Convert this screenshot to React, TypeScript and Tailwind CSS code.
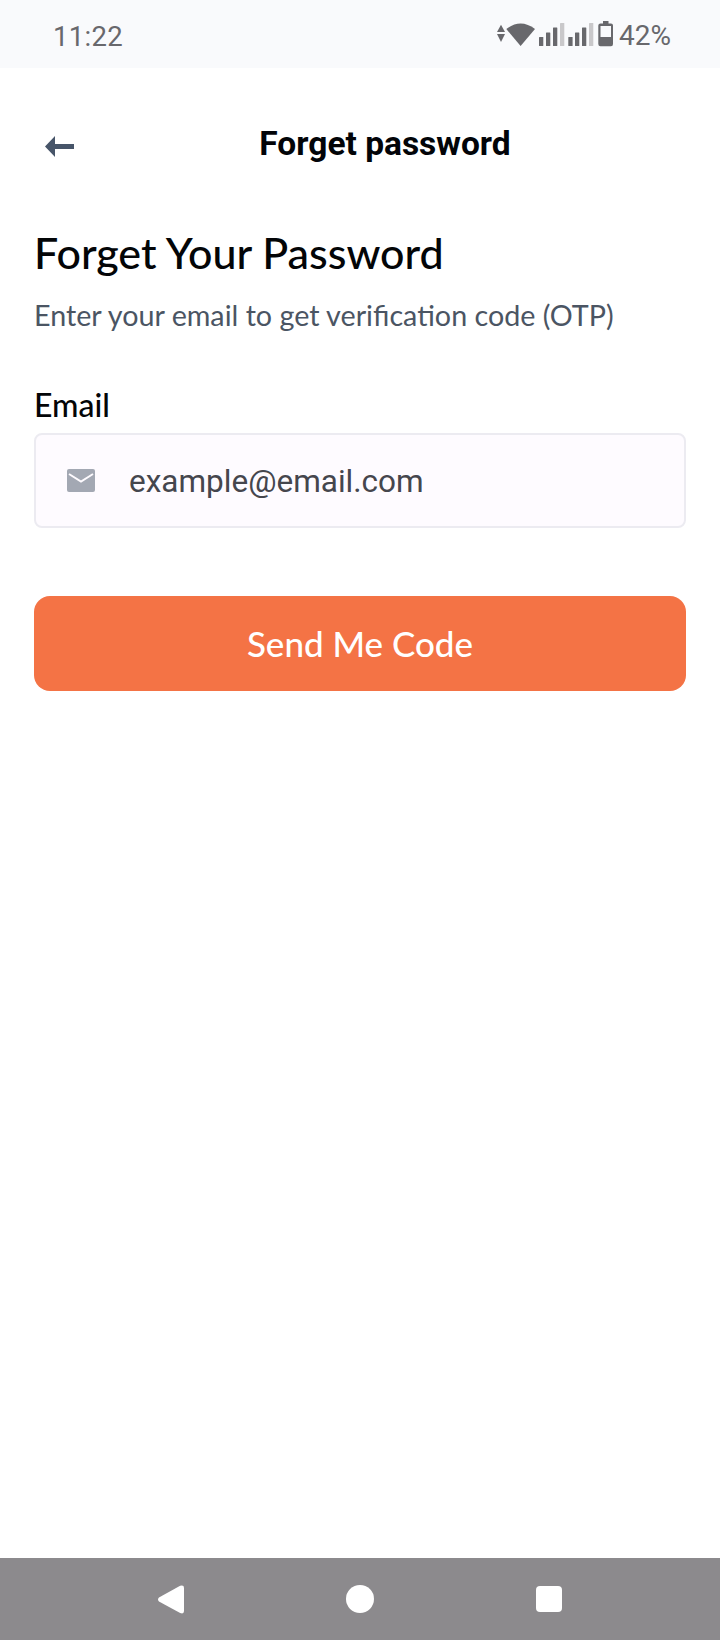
function StatusIcons() {
    return (
        <svg width="120" height="30" viewBox="0 0 120 30" className="text-[#68686c]" fill="currentColor">
            {/* data arrows */}
            <path d="M5 5.7 L9 13 H1 Z M1 15 H9 L5 23 Z" />
            {/* wifi */}
            <path d="M10.3 10 Q24.6 -1 39 10 L24.6 27 Z" />
            {/* signal 1 */}
            <rect x="43" y="18" width="4.3" height="9" rx="0.5" />
            <rect x="50" y="13.5" width="4.3" height="13.5" rx="0.5" />
            <rect x="57" y="8.5" width="4.3" height="18.5" rx="0.5" />
            <rect x="64" y="4" width="4.3" height="23" rx="0.5" fill="#c9c8ca" />
            {/* signal 2 */}
            <rect x="72.3" y="18" width="4.3" height="9" rx="0.5" />
            <rect x="79" y="13.5" width="4.3" height="13.5" rx="0.5" />
            <rect x="86" y="8.5" width="4.3" height="18.5" rx="0.5" />
            <rect x="93" y="4" width="4.3" height="23" rx="0.5" fill="#c9c8ca" />
            {/* battery */}
            <path
                fillRule="evenodd"
                d="M107 2 H112.5 V4.5 H115 Q117 4.5 117 6.5 V25 Q117 27.3 115 27.3 H104.5 Q102.3 27.3 102.3 25 V6.5 Q102.3 4.5 104.5 4.5 H107 Z M104.5 7 V18 H115 V7 Z"
            />
        </svg>
    );
}

export default function App() {
    return (
        <div className="w-[720px] h-[1640px] flex flex-col bg-white font-['Roboto',sans-serif]">
            <div className="h-[68px] shrink-0 bg-[#f9fafc] flex items-center justify-between pl-[53px] pr-[49px] text-[#68686c]">
                <span className="mt-[5px] text-[27.5px] leading-none tracking-[0.3px]">11:22</span>
                <div className="flex items-center gap-[3px]">
                    <StatusIcons />
                    <span className="mt-[3px] text-[28px] leading-none">42%</span>
                </div>
            </div>

            <div className="flex-1 flex flex-col px-[34px]">
                <div className="relative h-[44px] mt-[54px] flex items-center justify-center">
                    <svg width="29" height="21" viewBox="0 0 29 21" fill="#475569" className="absolute left-[11px] top-[14px]">
                        <path d="M10 0 V8 H29 V13 H10 V21 L0 10.5 Z" />
                    </svg>
                    <h1 className="text-[33.5px] leading-none font-bold text-[#020408] ml-[50px]">Forget password</h1>
                </div>

                <h2 className="mt-[61px] text-[43px] leading-[52px] font-['Lato',sans-serif] font-medium text-[#030507]">Forget Your Password</h2>
                <p className="mt-[18px] text-[28.7px] leading-[36px] font-['Lato',sans-serif] text-[#4b5563]">Enter your email to get verification code (OTP)</p>

                <label className="mt-[53px] text-[32px] leading-[38px] font-['Lato',sans-serif] font-medium text-[#030507]">Email</label>
                <div className="mt-[9px] h-[95px] flex items-center pl-[31px] rounded-[8px] border-2 border-[#ecebf1] bg-[#fefbff]">
                    <svg width="28" height="23" viewBox="0 0 28 23" className="shrink-0">
                        <rect width="28" height="23" rx="2" fill="#a3a8b3" />
                        <path d="M2 5 L14 12.5 L26 5" fill="none" stroke="#fefbff" strokeWidth="2" />
                    </svg>
                    <span className="ml-[34px] mt-[3px] text-[31.5px] leading-none text-[#45464d]">example@email.com</span>
                </div>

                <button className="mt-[68px] h-[95px] rounded-[16px] bg-[#f47345] text-white text-[35px] font-['Lato',sans-serif] font-medium">Send Me Code</button>
            </div>

            <div className="h-[82px] shrink-0 bg-[#8c8a8d] flex items-center pl-[158px] gap-[162px]">
                <svg width="26" height="29" viewBox="0 0 27 30" fill="white">
                    <path d="M1 13 L23 0.8 Q27 -0.5 27 3 V27 Q27 30.5 23 29 L1 17 Q-1 15 1 13 Z" />
                </svg>
                <div className="w-[28px] h-[28px] rounded-full bg-white" />
                <div className="w-[26px] h-[26px] rounded-[4px] bg-white" />
            </div>
        </div>
    );
}
